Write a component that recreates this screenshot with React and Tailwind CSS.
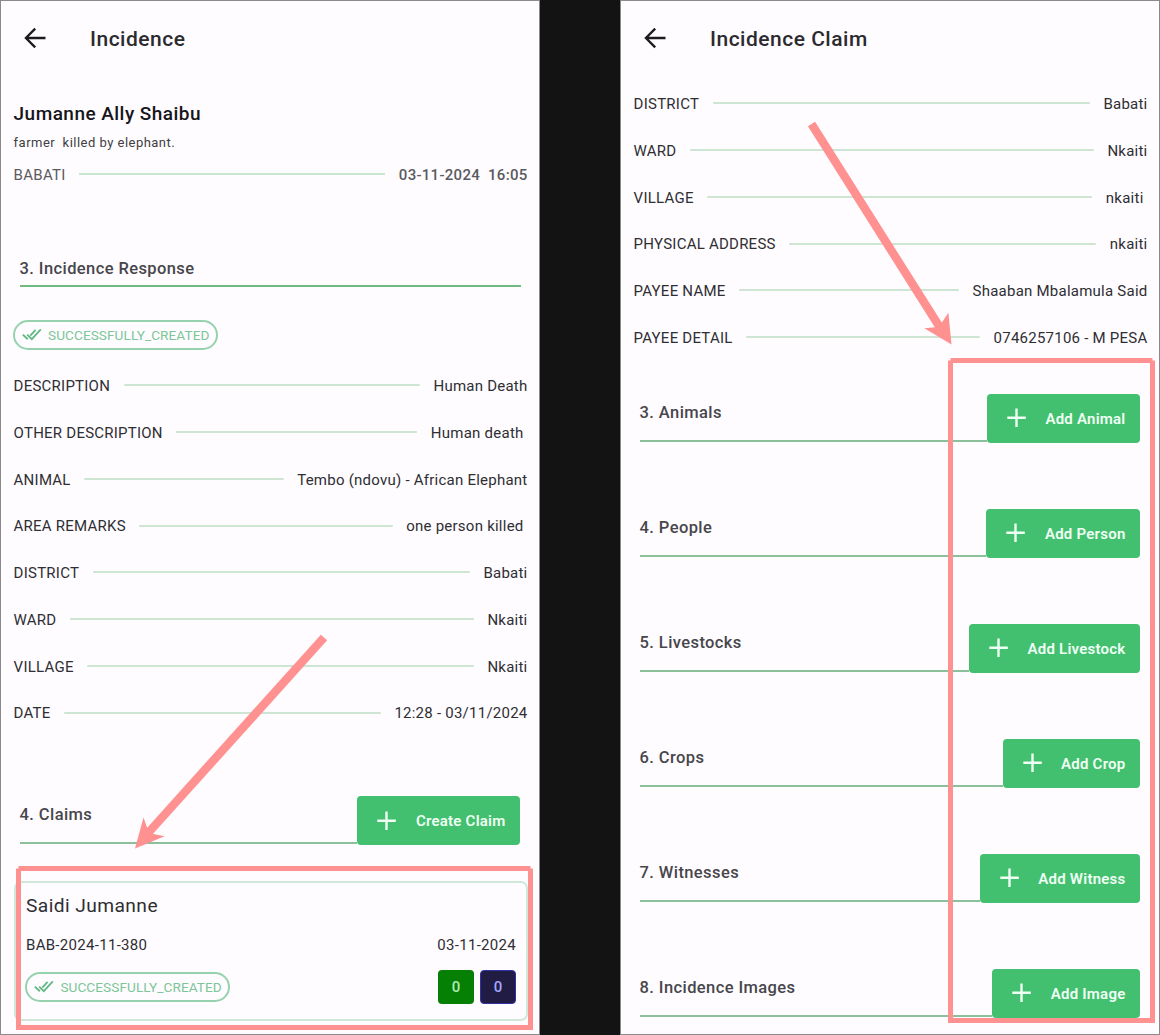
import React from "react";

const responseRows = [
  ["DESCRIPTION", "Human Death"],
  ["OTHER DESCRIPTION", "Human death "],
  ["ANIMAL", "Tembo (ndovu) - African Elephant"],
  ["AREA REMARKS", "one person killed "],
  ["DISTRICT", "Babati"],
  ["WARD", "Nkaiti"],
  ["VILLAGE", "Nkaiti"],
  ["DATE", "12:28 - 03/11/2024"],
];

const claimRows = [
  ["DISTRICT", "Babati"],
  ["WARD", "Nkaiti"],
  ["VILLAGE", "nkaiti "],
  ["PHYSICAL ADDRESS", "nkaiti"],
  ["PAYEE NAME", "Shaaban Mbalamula Said"],
  ["PAYEE DETAIL", "0746257106 - M PESA"],
];

const claimSections = [
  ["3. Animals", "Add Animal"],
  ["4. People", "Add Person"],
  ["5. Livestocks", "Add Livestock"],
  ["6. Crops", "Add Crop"],
  ["7. Witnesses", "Add Witness"],
  ["8. Incidence Images", "Add Image"],
];

function Header({ title }) {
  return (
    <header className="flex h-[75px] shrink-0 items-center pl-[23px]">
      <svg width="22" height="22" viewBox="0 0 22 22" fill="none" stroke="#1c1b1f" strokeWidth="2.3" className="-mt-[2px]">
        <path d="M21.5 11H2.5M11.2 1.6L1.9 11L11.2 20.4" />
      </svg>
      <h1 className="ml-[44px] text-[21px] leading-6 font-medium tracking-[0.5px] text-[#2b2a2e]">{title}</h1>
    </header>
  );
}

function Row({ label, value }) {
  return (
    <div className="flex h-[46.74px] shrink-0 items-center gap-[13.6px] text-[15px] tracking-[0.24px] whitespace-pre text-[#2f2e33]">
      <span>{label}</span>
      <span className="-mt-[2px] h-0.5 flex-1 rounded-full bg-[#cde5d2]" />
      <span>{value}</span>
    </div>
  );
}

function Section({ title, action }) {
  return (
    <section className="mr-[8px] ml-[6px] flex h-[49px] shrink-0">
      <div className="mb-[1px] flex-1 border-b-2 border-[#8cc09a]">
        <h2 className="pt-[9px] text-[16.5px] leading-5 font-medium tracking-[0.4px] text-[#47464b]">{title}</h2>
      </div>
      <button className="flex items-center rounded-[4px] bg-[#43c06f] pr-[14px] pl-5 text-[15px] font-semibold tracking-[0.24px] text-[#effff4]">
        <svg width="20" height="20" viewBox="0 0 20 20" stroke="currentColor" strokeWidth="2.4">
          <path d="M9.5 0.5V19M0.3 9.7H18.8" />
        </svg>
        <span className="ml-[18.5px] pt-0.5">{action}</span>
      </button>
    </section>
  );
}

function StatusChip() {
  return (
    <span className="-ml-[0.6px] flex h-[30px] w-[205px] shrink-0 items-center rounded-full border-2 border-[#96d2ad] pb-[2px] pl-[7px] text-[13.6px] tracking-[0.08px] text-[#7cc698]">
      <svg width="20" height="13" viewBox="0 0 20 13" fill="none" stroke="#63b985" strokeWidth="1.9">
        <path d="M0.8 6.6L5.8 11.3M5.2 6.6L9.8 11.2L18.8 1.4M8.3 7.6L13.6 1.8" />
      </svg>
      <span className="ml-[6px] pt-[1.5px]">SUCCESSFULLY_CREATED</span>
    </span>
  );
}

function Annotations() {
  return (
    <svg className="pointer-events-none absolute inset-0" width="1160" height="1035" viewBox="0 0 1160 1035" fill="none" stroke="#ff9191">
      <g strokeWidth="5">
        <path d="M18.5 868.5V1027.5H530.5V868.5M18.5 868.5H530.5" />
        <path d="M950.5 360.5V1020.5H1152.5V360.5M950.5 360.5H1152.5" />
      </g>
      <path d="M324 637.5L149 832M811.5 124L939 326" strokeWidth="8.5" />
      <g fill="#ff9191" stroke="none">
        <path d="M135 848.5L143.5 817.5L148 830L153.5 834L164.7 836.3Z" />
        <path d="M951.5 344.5L924.3 328.3L935 327.3L942 322.3L948.4 312.7Z" />
      </g>
    </svg>
  );
}

export default function App() {
  return (
    <main className="relative flex h-[1035px] w-[1160px] justify-between overflow-hidden bg-[#131313] font-['Roboto',sans-serif]">
      <div className="flex w-[540px] flex-col border border-[#8b898c] bg-[#fefcff]">
        <Header title="Incidence" />
        <div className="flex flex-col pr-[11.5px] pl-[12.6px]">
          <h2 className="mt-[26px] text-[19px] leading-6 font-medium tracking-[0.46px] text-[#161519]">Jumanne Ally Shaibu</h2>
          <p className="mt-[9px] text-[13px] leading-4 tracking-[0.48px] whitespace-pre text-[#3f3e42]">farmer  killed by elephant.</p>
          <div className="mt-[14px] flex h-5 items-center gap-[13.6px] text-[15px] tracking-[0.28px] whitespace-pre text-[#5b5a5e]">
            <span>BABATI</span>
            <span className="-mt-[2px] h-0.5 flex-1 bg-[#c9e6d2]" />
            <span className="font-medium">03-11-2024  16:05</span>
          </div>
          <section className="mt-[74px] mr-[7px] ml-[6px] h-[28px] border-b-2 border-[#72b881]">
            <h2 className="text-[16.5px] leading-5 font-medium tracking-[0.4px] text-[#47464b]">3. Incidence Response</h2>
          </section>
          <div className="mt-[33px] mb-[13px] flex">
            <StatusChip />
          </div>
          {responseRows.map(([label, value]) => (
            <Row key={label} label={label} value={value} />
          ))}
          <div className="mt-[59.3px]">
            <Section title="4. Claims" action="Create Claim" />
          </div>
          <article className="mt-[36px] flex h-[140px] flex-col rounded-[7px] border-2 border-[#cfe8da] pr-[9.5px] pl-[10.4px]">
            <h3 className="mt-[11px] text-[19.2px] leading-6 tracking-[0.42px] text-[#2f2e33]">Saidi Jumanne</h3>
            <div className="mt-[17px] flex justify-between text-[15px] leading-5 tracking-[0.3px] text-[#2f2e33]">
              <span>BAB-2024-11-380</span>
              <span>03-11-2024</span>
            </div>
            <div className="mt-[15px] flex h-[34px] items-center gap-[6px]">
              <StatusChip />
              <span className="ml-auto flex h-[34px] w-9 items-center justify-center rounded-[4px] bg-[#058005] text-[15px] font-medium text-[#b4eab2]">0</span>
              <span className="flex h-[34px] w-9 items-center justify-center rounded-[4px] border border-[#3330a4] bg-[#211c43] text-[15px] font-medium text-[#a5a5ff]">0</span>
            </div>
          </article>
        </div>
      </div>
      <div className="flex w-[540px] flex-col border border-[#8b898c] bg-[#fefcff]">
        <Header title="Incidence Claim" />
        <div className="flex flex-col pt-[5px] pr-[11.5px] pl-[12.6px]">
          {claimRows.map(([label, value]) => (
            <Row key={label} label={label} value={value} />
          ))}
          <div className="mt-[32.2px] flex flex-col gap-[66px]">
            {claimSections.map(([title, action]) => (
              <Section key={title} title={title} action={action} />
            ))}
          </div>
        </div>
      </div>
      <Annotations />
    </main>
  );
}
